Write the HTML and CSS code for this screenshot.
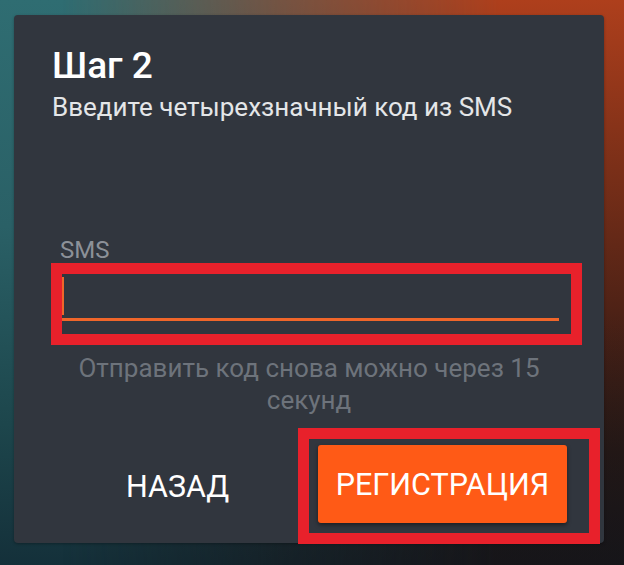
FILE: index.html
```html
<!DOCTYPE html>
<html lang="ru">
<head>
<meta charset="utf-8">
<title>Шаг 2</title>
<link rel="stylesheet" href="styles.css">
</head>
<body>
<div class="dialog">
  <h1 class="title">Шаг 2</h1>
  <p class="subtitle">Введите четырехзначный код из SMS</p>
  <div class="field">
    <label class="label">SMS</label>
    <div class="highlight">
      <div class="input"><span class="cursor"></span></div>
    </div>
  </div>
  <p class="hint">Отправить код снова можно через 15<br>секунд</p>
  <div class="actions">
    <button class="btn btn-text">НАЗАД</button>
    <div class="highlight highlight-btn">
      <button class="btn btn-primary">РЕГИСТРАЦИЯ</button>
    </div>
  </div>
</div>
</body>
</html>
```
FILE: styles.css
```css
html {
  margin: 0;
  padding: 0;
  background: linear-gradient(180deg, #2f6d72 0%, #2a6066 40%, #1d464c 75%, #14303a 100%);
}
body {
  margin: 0;
  padding: 0;
  position: relative;
  width: 624px;
  height: 565px;
  overflow: hidden;
  font-family: Roboto, "Noto Sans", sans-serif;
  display: flex;
  flex-direction: column;
  align-items: flex-start;
}
body::before {
  content: "";
  position: absolute;
  inset: 0;
  z-index: -1;
  background:
    linear-gradient(180deg, rgba(20,24,28,0) 55%, rgba(18,22,26,0.6) 100%),
    linear-gradient(180deg, #ae3f1c 0%, #7a2f18 30%, #4e2216 55%, #2a1814 80%, #1c1418 100%);
  -webkit-mask-image: linear-gradient(90deg, rgba(0,0,0,0) 10%, rgba(0,0,0,0.55) 45%, #000 80%);
  mask-image: linear-gradient(90deg, rgba(0,0,0,0) 10%, rgba(0,0,0,0.55) 45%, #000 80%);
}
.dialog {
  margin: 15px 0 0 14px;
  width: 590px;
  height: 528px;
  box-sizing: border-box;
  background: #31363e;
  border-radius: 4px;
  padding: 28px 0 0 38px;
  display: flex;
  flex-direction: column;
  box-shadow: 0 1px 3px rgba(0,0,0,0.3);
}
.title {
  margin: 0;
  font-size: 37px;
  font-weight: 500;
  line-height: 46px;
  color: #ffffff;
}
.subtitle {
  margin: 2px 0 0 0;
  font-size: 26px;
  font-weight: 400;
  line-height: 32px;
  color: #e4e6e8;
}
.field {
  margin: 114px 0 0 -1px;
  display: flex;
  flex-direction: column;
}
.label {
  margin-left: 9px;
  font-size: 24px;
  line-height: 26px;
  color: #8c9198;
}
.highlight {
  border: 11px solid #e8212b;
  box-sizing: border-box;
}
.field .highlight {
  width: 531px;
  height: 82px;
}
.input {
  position: relative;
  margin-right: 12px;
  border-bottom: 3px solid #f0662a;
  box-sizing: border-box;
  height: 47px;
}
.cursor {
  position: absolute;
  left: 0;
  top: 3px;
  width: 2px;
  height: 38px;
  background: #f0662a;
}
.hint {
  margin: 7px 0 0 -38px;
  width: 590px;
  text-align: center;
  font-size: 26px;
  line-height: 32px;
  color: #6d737b;
}
.actions {
  margin: 12px 0 0 -38px;
  display: flex;
  align-items: center;
}
.btn {
  border: none;
  font-family: Roboto, "Noto Sans", sans-serif;
  font-size: 30.5px;
  font-weight: 400;
  cursor: pointer;
}
.btn-text {
  background: transparent;
  color: #ffffff;
  margin-left: 112px;
  padding: 0;
  width: 103px;
}
.highlight-btn {
  margin-left: 69px;
  width: 302px;
  height: 116px;
  padding: 6px 0 0 9px;
}
.btn-primary {
  width: 249px;
  height: 78px;
  padding: 0;
  background: #ff5a16;
  color: #ffffff;
  border-radius: 3px;
  box-shadow: 0 2px 4px rgba(0,0,0,0.45);
}
```
